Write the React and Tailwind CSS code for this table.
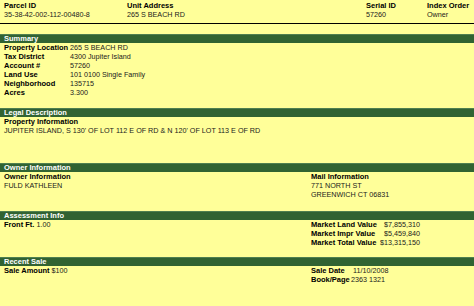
import React from 'react';

const Bar = ({ title }) => (
    <div className="h-[9px] bg-[#316332] border-t border-[#4f7f4f] pl-[4px] text-white font-bold text-[7.5px] leading-[8px]">
        {title}
    </div>
);

const Label = ({ children, className = '' }) => (
    <span className={`font-bold text-black text-[7.5px] ${className}`}>{children}</span>
);

const summaryRows = [
    ['Property Location', '265 S BEACH RD'],
    ['Tax District', '4300 Jupiter Island'],
    ['Account #', '57260'],
    ['Land Use', '101 0100 Single Family'],
    ['Neighborhood', '135715'],
    ['Acres', '3.300'],
];

const marketRows = [
    ['Market Land Value', '$7,855,310'],
    ['Market Impr Value', '$5,459,840'],
    ['Market Total Value', '$13,315,150'],
];

const App = () => {
    return (
        <div className="w-[474px] h-[306px] overflow-hidden bg-[#ffff99] font-['Liberation_Sans',Arial,sans-serif] text-[7.2px] leading-[9px] text-[#1a1a1a]">
            {/* header */}
            <div className="flex pl-[4px] pt-[1px]">
                <div className="w-[123px]">
                    <Label className="block">Parcel ID</Label>
                    <div>35-38-42-002-112-00480-8</div>
                </div>
                <div className="w-[239px]">
                    <Label className="block">Unit Address</Label>
                    <div>265 S BEACH RD</div>
                </div>
                <div className="w-[61px]">
                    <Label className="block">Serial ID</Label>
                    <div>57260</div>
                </div>
                <div>
                    <Label className="block">Index Order</Label>
                    <div>Owner</div>
                </div>
            </div>
            <div className="mt-[4px] h-px bg-black" />

            {/* summary */}
            <div className="mt-[10px]">
                <Bar title="Summary" />
                <div className="pl-[4px]">
                    {summaryRows.map(([label, value]) => (
                        <div key={label} className="flex">
                            <Label className="block w-[66px] whitespace-nowrap">{label}</Label>
                            <div>{value}</div>
                        </div>
                    ))}
                </div>
            </div>

            {/* legal */}
            <div className="mt-[11px]">
                <Bar title="Legal Description" />
                <div className="pl-[4px]">
                    <Label className="block">Property Information</Label>
                    <div>JUPITER ISLAND, S 130' OF LOT 112 E OF RD &amp; N 120' OF LOT 113 E OF RD</div>
                </div>
            </div>

            {/* owner */}
            <div className="mt-[28px]">
                <Bar title="Owner Information" />
                <div className="flex pl-[4px]">
                    <div className="w-[307px]">
                        <Label className="block">Owner Information</Label>
                        <div>FULD KATHLEEN</div>
                    </div>
                    <div>
                        <Label className="block">Mail Information</Label>
                        <div>771 NORTH ST</div>
                        <div>GREENWICH CT 06831</div>
                    </div>
                </div>
            </div>

            {/* assessment */}
            <div className="mt-[12px]">
                <Bar title="Assessment Info" />
                <div className="flex pl-[4px]">
                    <div className="w-[307px]">
                        <Label>Front Ft.</Label> 1.00
                    </div>
                    <div>
                        {marketRows.map(([label, value]) => (
                            <div key={label} className="flex">
                                <Label className="block w-[69px] whitespace-nowrap">{label}</Label>
                                <div className="w-[40px] text-right">{value}</div>
                            </div>
                        ))}
                    </div>
                </div>
            </div>

            {/* recent sale */}
            <div className="mt-[10px]">
                <Bar title="Recent Sale" />
                <div className="flex pl-[4px]">
                    <div className="w-[307px]">
                        <Label>Sale Amount</Label> $100
                    </div>
                    <div>
                        <div className="flex">
                            <Label className="block w-[40px] whitespace-nowrap">Sale Date</Label>
                            <div className="ml-[2px]">11/10/2008</div>
                        </div>
                        <div className="flex">
                            <Label className="block w-[40px] whitespace-nowrap">Book/Page</Label>
                            <div>2363 1321</div>
                        </div>
                    </div>
                </div>
            </div>
        </div>
    );
};

export default App;
